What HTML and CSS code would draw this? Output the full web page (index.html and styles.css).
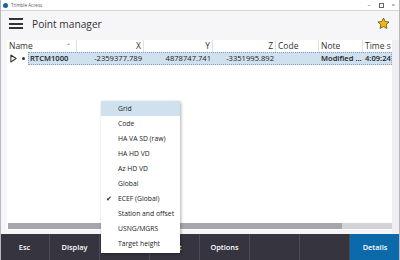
FILE: index.html
```html
<!DOCTYPE html>
<html lang="en">
<head>
  <meta charset="UTF-8" />
  <title>Trimble Access</title>
  <link rel="stylesheet" href="styles.css">
</head>
<body>
  <div class="window">
    <div class="titlebar">
      <span class="app-icon"></span>
      <span class="app-name">Trimble Access</span>
      <span class="controls">
        <span class="ctl">&#8211;</span>
        <span class="ctl box"></span>
        <span class="ctl">&#215;</span>
      </span>
    </div>

    <header class="appbar">
      <div class="burger"><i></i><i></i><i></i></div>
      <h1>Point manager</h1>
      <svg class="star" viewBox="0 0 24 24" width="13" height="13">
        <path d="M12 1.8l3.1 6.6 7.1.8-5.3 4.9 1.5 7.1L12 17.6l-6.4 3.6 1.5-7.1L1.8 9.2l7.1-.8z" fill="#f7b80c" stroke="#5a4a10" stroke-width="1.4" stroke-linejoin="round"/>
      </svg>
    </header>

    <main class="main">
      <div class="grid">
        <div class="head">
          <div class="hc name">Name <span class="caret">&#8963;</span></div>
          <div class="hc num">X</div>
          <div class="hc num">Y</div>
          <div class="hc num">Z</div>
          <div class="hc">Code</div>
          <div class="hc">Note</div>
          <div class="hc">Time s</div>
        </div>
        <div class="row">
          <div class="gutter">
            <svg class="expander" viewBox="0 0 8 10" width="7" height="9">
              <path d="M1 1l6 4-6 4z" fill="none" stroke="#333" stroke-width="1.2" stroke-linejoin="round"/>
            </svg>
            <span class="dot"></span>
          </div>
          <div class="cells">
            <div class="c b">RTCM1000</div>
            <div class="c num">-2359377.789</div>
            <div class="c num">4878747.741</div>
            <div class="c num">-3351995.892</div>
            <div class="c"></div>
            <div class="c b">Modified ...</div>
            <div class="c b">4:09:24</div>
          </div>
        </div>
        <div class="empty"></div>
        <div class="hscroll"><div class="thumb"></div></div>
      </div>
      <div class="vstrip"></div>
    </main>

    <footer class="softkeys">
      <div class="key">Esc</div>
      <div class="key">Display</div>
      <div class="key">Filter</div>
      <div class="key">Edit</div>
      <div class="key">Options</div>
      <div class="key"></div>
      <div class="key"></div>
      <div class="key primary">Details</div>
    </footer>

    <ul class="menu">
      <li class="hover">Grid</li>
      <li>Code</li>
      <li>HA VA SD (raw)</li>
      <li>HA HD VD</li>
      <li>Az HD VD</li>
      <li>Global</li>
      <li class="checked">ECEF (Global)</li>
      <li>Station and offset</li>
      <li>USNG/MGRS</li>
      <li>Target height</li>
    </ul>
  </div>
</body>
</html>
```

FILE: styles.css
```css
body {
  margin: 0;
  font-family: 'Open Sans', 'Noto Sans', sans-serif;
  color: #222;
  background: #fff;
}
.window {
  position: relative;
  width: 400px;
  height: 260px;
  box-sizing: border-box;
  border-left: 1px solid #b8b8bc;
  border-right: 1px solid #b8b8bc;
  display: flex;
  flex-direction: column;
  overflow: hidden;
  background: #f6f6f8;
}
.titlebar {
  height: 10px;
  flex: none;
  display: flex;
  align-items: center;
  background: #fff;
  border-bottom: 1px solid #d6d6da;
  padding-left: 2px;
}
.app-icon {
  width: 5px;
  height: 5px;
  border-radius: 50%;
  background: #1565a8;
}
.app-name {
  font-size: 4.5px;
  color: #555;
  margin-left: 3px;
}
.controls {
  margin-left: auto;
  display: flex;
  align-items: center;
  gap: 8px;
  margin-right: 4px;
  font-size: 6px;
  color: #555;
}
.ctl.box {
  width: 3px;
  height: 3px;
  border: 1px solid #666;
}
.appbar {
  height: 25px;
  flex: none;
  display: flex;
  align-items: center;
  padding: 0 9px 0 8px;
}
.burger {
  width: 14px;
  display: flex;
  flex-direction: column;
  gap: 2.5px;
}
.burger i {
  display: block;
  height: 2px;
  background: #333;
}
.appbar h1 {
  font-size: 10.2px;
  font-weight: 400;
  margin: 0 0 0 9px;
  color: #333;
}
.star {
  margin-left: auto;
}
.main {
  flex: 1;
  display: flex;
  padding: 4px 0 0 6px;
  min-height: 0;
}
.grid {
  width: 385px;
  background: #fff;
  display: flex;
  flex-direction: column;
  margin-bottom: 4px;
}
.head {
  display: grid;
  grid-template-columns: 70px 67px 69px 63px 43px 44px 29px;
  height: 12px;
  font-size: 8.5px;
  color: #333;
}
.hc {
  border-right: 1px solid #e2e2e6;
  padding: 0 2px;
  line-height: 12px;
  white-space: nowrap;
  overflow: hidden;
}
.hc:last-child {
  border-right: none;
}
.hc.name {
  display: flex;
  justify-content: space-between;
}
.caret {
  font-size: 6px;
  color: #666;
  margin-right: 3px;
}
.num {
  text-align: right;
}
.row {
  display: flex;
  height: 13px;
}
.gutter {
  width: 21px;
  display: flex;
  align-items: center;
  padding-left: 3px;
  gap: 5px;
}
.dot {
  width: 3px;
  height: 3px;
  border-radius: 50%;
  background: #333;
}
.cells {
  flex: 1;
  display: grid;
  grid-template-columns: 49px 67px 69px 63px 43px 44px 29px;
  background: #cfe1ef;
  outline: 1px dotted #7d9fbd;
  outline-offset: -1px;
  font-size: 7.6px;
}
.c {
  line-height: 13px;
  padding: 0 2px;
  white-space: nowrap;
  overflow: hidden;
}
.c.b {
  font-weight: 600;
}
.empty {
  flex: 1;
}
.hscroll {
  height: 6px;
  margin: 0 0 1px 1px;
  background: #d2d2d8;
}
.thumb {
  width: 334px;
  height: 100%;
  background: #a6a6ad;
}
.vstrip {
  flex: 1;
  background: #eeeef3;
}
.softkeys {
  height: 26px;
  flex: none;
  display: grid;
  grid-template-columns: repeat(8, 1fr);
  background: #35343f;
  margin: 0 -1px;
}
.key {
  color: #fff;
  font-size: 7.4px;
  font-weight: 600;
  display: flex;
  align-items: center;
  justify-content: center;
  border-right: 1px solid #4b4a57;
}
.key.primary {
  background: #0d6aaa;
  border-right: none;
}
.menu {
  position: absolute;
  left: 100px;
  top: 101px;
  width: 79px;
  margin: 0;
  padding: 0 0 2px;
  list-style: none;
  background: #fff;
  box-shadow: 1px 1px 3px rgba(0,0,0,0.3);
  font-size: 6.8px;
  color: #222;
}
.menu li {
  height: 15px;
  line-height: 15px;
  padding-left: 17px;
  position: relative;
  white-space: nowrap;
}
.menu li.hover {
  background: #cfe1ef;
}
.menu li.checked::before {
  content: "\2714";
  position: absolute;
  left: 5px;
  font-size: 6.5px;
}
```
